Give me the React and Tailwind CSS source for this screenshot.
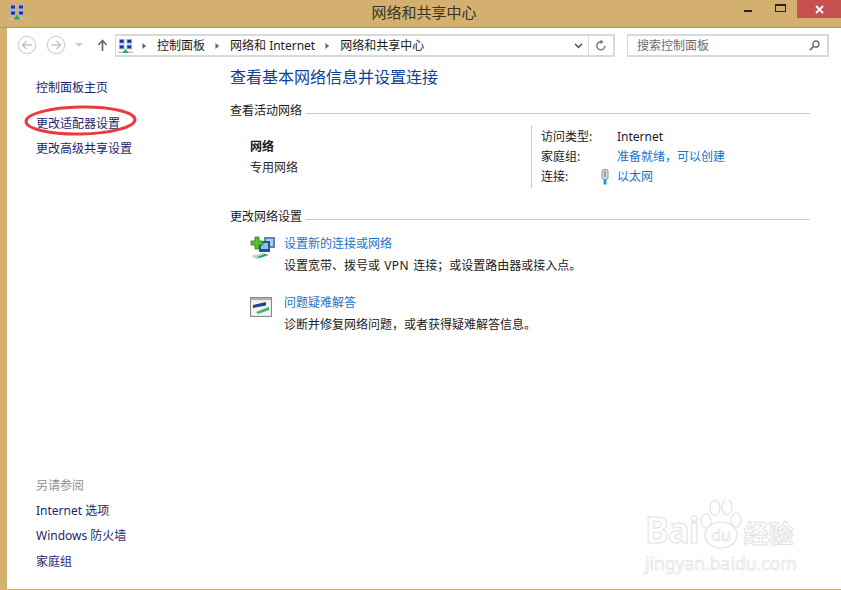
import React from "react";

const NetIcon = ({ className = "" }) => (
  <svg viewBox="0 0 16 16" className={className}>
    <rect x="1" y="0.5" width="6" height="5" fill="#9fb4d8" />
    <rect x="2" y="1.5" width="4" height="3" fill="#1a2fb0" />
    <rect x="9" y="0.5" width="6" height="5" fill="#9fb4d8" />
    <rect x="10" y="1.5" width="4" height="3" fill="#1a2fb0" />
    <rect x="1" y="6.5" width="6" height="5" fill="#9fb4d8" />
    <rect x="2" y="7.5" width="4" height="3" fill="#1a2fb0" />
    <rect x="9" y="6.5" width="6" height="5" fill="#9fb4d8" />
    <rect x="10" y="7.5" width="4" height="3" fill="#1a2fb0" />
    <rect x="0" y="14" width="16" height="1.5" fill="#b8c4b8" />
    <path d="M5 15.5 L6 13 H7 V11.5 H9 V13 H10 L11 15.5 Z" fill="#18b060" />
  </svg>
);

const CircleArrow = ({ dir }) => (
  <svg viewBox="0 0 20 20" className="w-[20px] h-[20px]">
    <circle cx="10" cy="10" r="8.7" fill="none" stroke="#d4d4d4" strokeWidth="1.3" />
    <path
      d={dir === "left" ? "M15 10 H6 M9.5 6 L5.5 10 L9.5 14" : "M5 10 H14 M10.5 6 L14.5 10 L10.5 14"}
      fill="none"
      stroke="#c8c8c8"
      strokeWidth="1.7"
    />
  </svg>
);

const Caret = () => (
  <svg viewBox="0 0 6 8" className="w-[5px] h-[8px] shrink-0">
    <path d="M0.5 0.5 L5 4 L0.5 7.5 Z" fill="#6a6a6a" />
  </svg>
);

const AddIcon = () => (
  <svg viewBox="0 0 26 24" className="w-[26px] h-[24px] shrink-0">
    <rect x="14" y="1" width="11" height="11" fill="#5b86bd" />
    <rect x="16" y="3" width="7" height="7" fill="#a9cdee" />
    <rect x="9" y="5" width="11" height="11" fill="#27509c" />
    <rect x="11" y="7" width="7" height="6" fill="#8fc0ea" />
    <path d="M5 1 H9 V5 H13 V9 H9 V13 H5 V9 H1 V5 H5 Z" fill="#55c030" stroke="#2d7a1c" strokeWidth="0.8" />
    <path d="M1 20 L14 17 L20 19 L7 23 Z" fill="#c4ccd0" />
    <path d="M7 21 L15 18 L18 19 L10 22 Z" fill="#22a858" />
  </svg>
);

const FixIcon = () => (
  <svg viewBox="0 0 22 20" className="w-[22px] h-[20px] shrink-0">
    <rect x="0.5" y="0.5" width="21" height="19" fill="#e8e8e8" stroke="#8a8a8a" />
    <rect x="1" y="1" width="20" height="2" fill="#b0b0b0" />
    <rect x="2" y="4" width="18" height="14" fill="#f4f4f4" />
    <path d="M3 8 L16 5 V8.5 L3 11 Z" fill="#23438c" />
    <path d="M6 15 L19 10 V13 L8 17 Z" fill="#3cb46a" />
  </svg>
);

const Side = ({ children, className = "" }) => (
  <div className={`text-[12px] leading-[16px] text-[#1b1f6e] ${className}`}>{children}</div>
);

const Heading = ({ children, className = "" }) => (
  <div className={`flex items-center gap-[4px] text-[12px] leading-[16px] text-[#1a1a1a] ${className}`}>
    <span className="shrink-0">{children}</span>
    <span className="flex-1 h-px bg-[#c9c9c9] mt-[4px]" />
  </div>
);

export default function App() {
  return (
    <div
      className="relative w-[841px] h-[590px] overflow-hidden bg-[#d3b06f] flex flex-col"
      style={{ fontFamily: '"Noto Sans", "Noto Sans CJK SC", sans-serif' }}
    >
      {/* title bar */}
      <div className="h-[27px] shrink-0 flex items-start relative">
        <NetIcon className="w-[16px] h-[16px] ml-[9px] mt-[4px]" />
        <div className="flex-1 text-center text-[15px] leading-[18px] mt-[3px] text-[#3b3320] pl-[90px]">网络和共享中心</div>
        <div className="flex items-start">
          <div className="w-[30px] h-[18px] flex justify-center">
            <div className="w-[8px] h-[2px] bg-[#222] mt-[10px]" />
          </div>
          <div className="w-[34px] h-[18px] flex justify-center">
            <div className="w-[11px] h-[8px] border border-t-2 border-[#222] mt-[4px]" />
          </div>
          <div className="w-[44px] h-[18px] bg-[#c75050] flex items-center justify-center">
            <svg viewBox="0 0 9 9" className="w-[9px] h-[9px]">
              <path d="M1 1 L8 8 M8 1 L1 8" stroke="#fff" strokeWidth="1.8" />
            </svg>
          </div>
        </div>
      </div>
      <div className="h-px shrink-0 bg-[#b39558]" />

      {/* window body */}
      <div className="flex-1 ml-[7px] mb-px bg-white flex flex-col min-h-0">
        {/* nav */}
        <div className="h-[33px] shrink-0 flex items-start pt-[6px]">
          <div className="ml-[10px] mt-[1px] flex items-center">
            <CircleArrow dir="left" />
            <div className="w-[9px]" />
            <CircleArrow dir="right" />
            <svg viewBox="0 0 8 4" className="w-[8px] h-[4px] ml-[9px]">
              <path d="M0 0 H8 L4 4 Z" fill="#d0d0d0" />
            </svg>
            <svg viewBox="0 0 12 14" className="w-[11px] h-[13px] ml-[14px]">
              <path d="M6 13 V2 M1.5 6.5 L6 1.5 L10.5 6.5" fill="none" stroke="#6a6a6a" strokeWidth="1.8" />
            </svg>
          </div>
          <div className="ml-[7px] w-[500px] h-[23px] border-2 border-[#d9d9d9] border-l flex items-center">
            <NetIcon className="w-[15px] h-[16px] ml-[2px]" />
            <div className="ml-[9px]"><Caret /></div>
            <span className="ml-[10px] text-[12px] text-[#1a1a1a]">控制面板</span>
            <div className="ml-[10px]"><Caret /></div>
            <span className="ml-[10px] text-[12px] text-[#1a1a1a]">网络和 Internet</span>
            <div className="ml-[10px]"><Caret /></div>
            <span className="ml-[10px] text-[12px] text-[#1a1a1a]">网络和共享中心</span>
            <div className="flex-1" />
            <svg viewBox="0 0 10 7" className="w-[9px] h-[6px] mr-[5px]">
              <path d="M1 1 L5 5 L9 1" fill="none" stroke="#5a5a5a" strokeWidth="1.8" />
            </svg>
            <div className="w-px h-full bg-[#d9d9d9]" />
            <div className="w-[24px] flex justify-center">
              <svg viewBox="0 0 14 14" className="w-[12px] h-[13px]">
                <path d="M11.5 7.5 A4.7 4.7 0 1 1 7.5 2.7" fill="none" stroke="#7a7a7a" strokeWidth="1.7" />
                <path d="M6.5 0 L10 2.8 L6.5 5.5 Z" fill="#7a7a7a" />
              </svg>
            </div>
          </div>
          <div className="ml-[12px] w-[202px] h-[23px] border-2 border-[#d9d9d9] border-l flex items-center pl-[9px]">
            <span className="text-[12px] text-[#6d6d6d]">搜索控制面板</span>
            <div className="flex-1" />
            <svg viewBox="0 0 12 12" className="w-[11px] h-[11px] mr-[7px]">
              <circle cx="7.5" cy="4.5" r="3.3" fill="none" stroke="#6f6f6f" strokeWidth="1.6" />
              <path d="M5 7 L1 11" stroke="#6f6f6f" strokeWidth="2" />
            </svg>
          </div>
        </div>

        <div className="flex-1 flex min-h-0">
          {/* sidebar */}
          <div className="w-[223px] shrink-0 pl-[29px] flex flex-col">
            <Side className="mt-[19px]">控制面板主页</Side>
            <Side className="mt-[20px]">更改适配器设置</Side>
            <Side className="mt-[9px]">更改高级共享设置</Side>
            <div className="flex-1" />
            <div className="text-[12px] leading-[16px] text-[#8f8f8f]">另请参阅</div>
            <Side className="mt-[9px]">Internet 选项</Side>
            <Side className="mt-[9px]">Windows 防火墙</Side>
            <Side className="mt-[10px] mb-[19px]">家庭组</Side>
          </div>

          {/* main */}
          <div className="flex-1 pr-[31px] flex flex-col">
            <div className="mt-[6px] text-[16px] leading-[20px] text-[#0f3f96]">查看基本网络信息并设置连接</div>
            <Heading className="mt-[16px]">查看活动网络</Heading>
            <div className="mt-[6px] flex h-[63px]">
              <div className="w-[301px] pl-[20px] pt-[14px]">
                <div className="text-[12px] leading-[16px] font-bold text-[#1a1a1a]">网络</div>
                <div className="mt-[5px] text-[12px] leading-[16px] text-[#2a2a2a]">专用网络</div>
              </div>
              <div className="w-px bg-[#c9c9c9]" />
              <div className="pl-[9px] pt-[4px] flex flex-col gap-[4px] text-[12px] leading-[16px] text-[#1a1a1a]">
                <div className="flex"><span className="w-[76px]">访问类型:</span><span>Internet</span></div>
                <div className="flex"><span className="w-[76px]">家庭组:</span><span className="text-[#1a73c4]">准备就绪，可以创建</span></div>
                <div className="flex items-center">
                  <span className="w-[60px]">连接:</span>
                  <svg viewBox="0 0 8 16" className="w-[8px] h-[16px] mr-[8px]">
                    <rect x="1" y="0.5" width="6" height="10" rx="2" fill="#d4dbe2" stroke="#8593a0" />
                    <rect x="3" y="2" width="2" height="6" fill="#8fa0ae" />
                    <rect x="2.5" y="11" width="3" height="4.5" fill="#2a9ad6" />
                  </svg>
                  <span className="text-[#1a73c4]">以太网</span>
                </div>
              </div>
            </div>
            <Heading className="mt-[21px]">更改网络设置</Heading>
            <div className="mt-[11px] pl-[20px] flex">
              <AddIcon />
              <div className="ml-[8px]">
                <div className="text-[12px] leading-[16px] text-[#1a73c4]">设置新的连接或网络</div>
                <div className="mt-[6px] text-[12px] leading-[16px] text-[#1a1a1a]">
                  设置宽带、拨号或 <span className="px-[1px] tracking-[0.5px]">VPN</span> 连接；或设置路由器或接入点。
                </div>
              </div>
            </div>
            <div className="mt-[21px] pl-[20px] flex">
              <div className="mt-[2px]"><FixIcon /></div>
              <div className="ml-[12px]">
                <div className="text-[12px] leading-[16px] text-[#1a73c4]">问题疑难解答</div>
                <div className="mt-[6px] text-[12px] leading-[16px] text-[#1a1a1a]">诊断并修复网络问题，或者获得疑难解答信息。</div>
              </div>
            </div>
          </div>
        </div>
      </div>

      {/* red hand-drawn ellipse */}
      <svg viewBox="0 0 120 40" className="absolute left-[20px] top-[100px] w-[120px] h-[40px] pointer-events-none">
        <ellipse cx="60.5" cy="20.5" rx="54.5" ry="13.5" fill="none" stroke="#ea3a42" strokeWidth="3" transform="rotate(-1 60 20)" />
      </svg>

      {/* watermark */}
      <div className="absolute left-[645px] top-[500px] w-[190px] h-[76px] pointer-events-none">
        <div className="flex items-end h-[50px]">
          <span className="text-[36px] leading-[40px] font-bold tracking-tight text-white [-webkit-text-stroke:1px_#e2e2e2]">Bai</span>
          <svg viewBox="0 0 46 50" className="w-[46px] h-[50px] -ml-[1px]">
            <g fill="#fff" stroke="#e2e2e2" strokeWidth="1.2">
              <ellipse cx="8" cy="21" rx="5" ry="7" />
              <ellipse cx="17" cy="8" rx="5" ry="7.5" />
              <ellipse cx="29" cy="7" rx="5" ry="7.5" />
              <ellipse cx="38" cy="20" rx="5" ry="7" />
              <ellipse cx="23" cy="35" rx="16" ry="13" />
            </g>
            <text x="23" y="41" textAnchor="middle" fontSize="16" fill="#fff" stroke="#e2e2e2" strokeWidth="0.7">du</text>
          </svg>
          <span className="text-[25px] leading-[34px] font-bold text-white [-webkit-text-stroke:1px_#e2e2e2]">经验</span>
        </div>
        <div className="text-[17.5px] leading-[20px] mt-[3px] text-white [-webkit-text-stroke:0.7px_#e2e2e2]">jingyan.baidu.com</div>
      </div>
    </div>
  );
}
